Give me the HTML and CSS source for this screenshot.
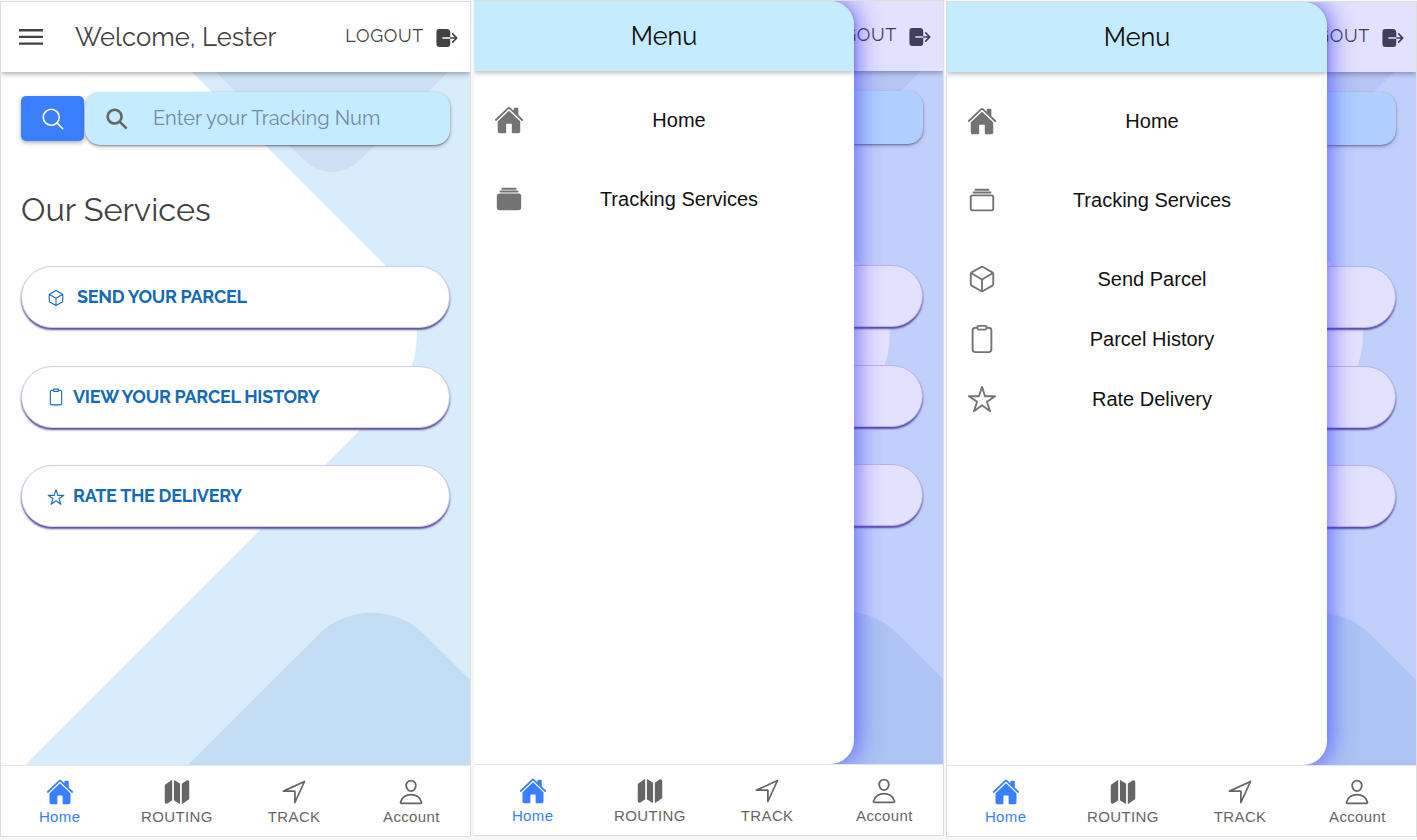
FILE: index.html
```html
<!DOCTYPE html>
<html lang="en">
<head>
<meta charset="utf-8">
<title>Parcel tracking</title>
<link rel="stylesheet" href="styles.css">
</head>
<body>
<svg class="sprite" aria-hidden="true">
  <symbol id="home" viewBox="0 0 512 512"><path fill="currentColor" d="M261.56 101.28a8 8 0 00-11.06 0L66.4 277.15a8 8 0 00-2.47 5.79L63.9 448a32 32 0 0032 32H192a16 16 0 0016-16V328a8 8 0 018-8h80a8 8 0 018 8v136a16 16 0 0016 16h96.06a32 32 0 0032-32V282.94a8 8 0 00-2.47-5.79z"/><path fill="currentColor" d="M490.91 244.15l-74.8-71.56V64a16 16 0 00-16-16h-48a16 16 0 00-16 16v32l-57.92-55.38C272.77 35.14 264.71 32 256 32c-8.68 0-16.72 3.14-22.14 8.63l-212.7 203.5c-6.22 6-7 15.87-1.34 22.37A16 16 0 0043 267.56L250.5 69.28a8 8 0 0111.06 0l207.52 198.28a16 16 0 0022.59-.44c6.14-6.36 5.63-16.86-.76-22.97z"/></symbol>
  <symbol id="albums" viewBox="0 0 512 512"><path fill="currentColor" d="M368 96H144a16 16 0 010-32h224a16 16 0 010 32zM400 144H112a16 16 0 010-32h288a16 16 0 010 32zM419.13 448H92.87A44.92 44.92 0 0148 403.13V204.87A44.92 44.92 0 0192.87 160h326.26A44.92 44.92 0 01464 204.87v198.26A44.92 44.92 0 01419.13 448z"/></symbol>
  <symbol id="albums-outline" viewBox="0 0 512 512"><g class="stroke"><rect x="64" y="176" width="384" height="256" rx="28.87"/><path d="M144 80h224M112 128h288"/></g></symbol>
  <symbol id="cube" viewBox="0 0 512 512"><path class="stroke" d="M448 341.37V170.61A32 32 0 00432.11 143l-152-88.46a47.94 47.94 0 00-48.24 0L79.89 143A32 32 0 0064 170.61v170.76A32 32 0 0079.89 369l152 88.46a48 48 0 0048.24 0l152-88.46A32 32 0 00448 341.37zM69 153.99l187 110 187-110M256 463.99v-200"/></symbol>
  <symbol id="clipboard" viewBox="0 0 512 512"><g class="stroke"><path d="M336 64h32a48 48 0 0148 48v320a48 48 0 01-48 48H144a48 48 0 01-48-48V112a48 48 0 0148-48h32"/><rect x="176" y="32" width="160" height="64" rx="26.13"/></g></symbol>
  <symbol id="star" viewBox="0 0 512 512"><path class="stroke" d="M480 208H308L256 48l-52 160H32l140 96-54 160 138-100 138 100-54-160z"/></symbol>
  <symbol id="map" viewBox="0 0 512 512"><path fill="currentColor" d="M48.17 113.34A32 32 0 0032 141.24V438a32 32 0 0047 28.37c.43-.23.85-.47 1.26-.74l84.14-55.05a8 8 0 003.63-6.72V46.45a8 8 0 00-12.51-6.63zM212.36 39.31A8 8 0 00200 46v357.56a8 8 0 003.63 6.72l96 62.42A8 8 0 00312 466V108.67a8 8 0 00-3.64-6.73zM464.53 46.47a31.64 31.64 0 00-31.5-.88 12.07 12.07 0 00-1.25.74l-84.15 55a8 8 0 00-3.63 6.72v357.46a8 8 0 0012.52 6.63l107.07-73.46a32 32 0 0016.41-28v-296a32.76 32.76 0 00-15.47-28.21z"/></symbol>
  <symbol id="navigate" viewBox="0 0 512 512"><path class="stroke" d="M448 64L64 240.14h200a8 8 0 018 8V448z"/></symbol>
  <symbol id="person" viewBox="0 0 512 512"><path class="stroke" d="M344 144c-3.920 52.870-44 96-88 96s-84.150-43.120-88-96c-4-55 35-96 88-96s92 42 88 96zM256 304c-87 0-175.300 48-191.640 138.600C62.390 453.520 68.570 464 80 464h352c11.440 0 17.620-10.480 15.650-21.400C431.300 352 343 304 256 304z"/></symbol>
  <symbol id="search" viewBox="0 0 512 512"><path class="stroke" d="M221.09 64a157.09 157.09 0 10157.09 157.09A157.1 157.1 0 00221.09 64zM338.29 338.29L448 448"/></symbol>
  <symbol id="search-bold" viewBox="0 0 512 512"><path fill="currentColor" d="M464 428L339.92 303.9a160.48 160.48 0 0030.72-94.58C370.64 120.37 298.27 48 209.32 48S48 120.37 48 209.32s72.37 161.32 161.32 161.32a160.48 160.48 0 0094.58-30.72L428 464zM209.32 319.69a110.38 110.38 0 11110.37-110.37 110.5 110.5 0 01-110.37 110.37z"/></symbol>
  <symbol id="logout" viewBox="0 0 512 512"><path fill="currentColor" d="M160 256a16 16 0 0116-16h144V136c0-32-33.79-56-64-56H104a56.06 56.06 0 00-56 56v240a56.06 56.06 0 0056 56h160a56.06 56.06 0 0056-56V272H176a16 16 0 01-16-16zM459.31 244.69l-80-80a16 16 0 00-22.62 22.62L409.37 240H320v32h89.37l-52.68 52.69a16 16 0 1022.62 22.62l80-80a16 16 0 000-22.62z"/></symbol>
  <symbol id="burger" viewBox="0 0 24 16"><path fill="currentColor" d="M0 0h24v2.4H0zM0 6.7h24v2.4H0zM0 13.4h24v2.4H0z"/></symbol>
  <symbol id="shapes" viewBox="0 0 469 693">
    <path fill="#d9ecfc" d="M191 0H469V693H24L389 328A92 92 0 0 0 389 198Z"/>
    <path fill="#ccdff3" d="M215 0H447L358.300 88.700A38.600 38.600 0 0 1 303.700 88.700Z"/>
    <path fill="#c2dcf3" d="M187 693L317.300 562.700A75.300 75.300 0 0 1 423.700 562.700L469 608V693Z"/>
  </symbol>
</svg>

<main class="board">
  <section class="phone">
    <div class="screen">
      <header class="topbar">
        <svg class="burger"><use href="#burger"/></svg>
        <h2 class="welcome">Welcome, Lester</h2>
        <span class="logout">LOGOUT</span>
        <svg class="logout-icon"><use href="#logout"/></svg>
      </header>
      <div class="content">
        <svg class="backdrop-art"><use href="#shapes"/></svg>
        <div class="search-row">
          <button class="search-btn"><svg class="i26"><use href="#search"/></svg></button>
          <div class="searchbar"><svg class="i26"><use href="#search-bold"/></svg><span class="placeholder">Enter your Tracking Num</span></div>
        </div>
        <h1 class="title">Our Services</h1>
        <div class="cards">
          <a class="card"><svg class="i18"><use href="#cube"/></svg><span class="send">SEND YOUR PARCEL</span></a>
          <a class="card"><svg class="i18"><use href="#clipboard"/></svg><span class="view">VIEW YOUR PARCEL HISTORY</span></a>
          <a class="card"><svg class="i18"><use href="#star"/></svg><span class="rate">RATE THE DELIVERY</span></a>
        </div>
      </div>
    </div>
    <nav class="tabs">
      <a class="tab active"><svg class="i28"><use href="#home"/></svg><span>Home</span></a>
      <a class="tab"><svg class="i28"><use href="#map"/></svg><span>ROUTING</span></a>
      <a class="tab"><svg class="i28"><use href="#navigate"/></svg><span>TRACK</span></a>
      <a class="tab"><svg class="i28"><use href="#person"/></svg><span>Account</span></a>
    </nav>
  </section>

  <section class="phone raised">
    <div class="screen">
      <header class="topbar">
        <span class="logout">LOGOUT</span>
        <svg class="logout-icon"><use href="#logout"/></svg>
      </header>
      <div class="content">
        <svg class="backdrop-art"><use href="#shapes"/></svg>
        <div class="search-row"><div class="search-btn"></div><div class="searchbar"></div></div>
        <div class="title"></div>
        <div class="cards"><div class="card"></div><div class="card"></div><div class="card"></div></div>
      </div>
      <div class="scrim"></div>
      <aside class="drawer">
        <h2 class="drawer-title">Menu</h2>
        <ul class="menu">
          <li class="item"><svg class="i30"><use href="#home"/></svg><span>Home</span></li>
          <li class="item spaced"><svg class="i30"><use href="#albums"/></svg><span>Tracking Services</span></li>
        </ul>
      </aside>
    </div>
    <nav class="tabs">
      <a class="tab active"><svg class="i28"><use href="#home"/></svg><span>Home</span></a>
      <a class="tab"><svg class="i28"><use href="#map"/></svg><span>ROUTING</span></a>
      <a class="tab"><svg class="i28"><use href="#navigate"/></svg><span>TRACK</span></a>
      <a class="tab"><svg class="i28"><use href="#person"/></svg><span>Account</span></a>
    </nav>
  </section>

  <section class="phone">
    <div class="screen">
      <header class="topbar">
        <span class="logout">LOGOUT</span>
        <svg class="logout-icon"><use href="#logout"/></svg>
      </header>
      <div class="content">
        <svg class="backdrop-art"><use href="#shapes"/></svg>
        <div class="search-row"><div class="search-btn"></div><div class="searchbar"></div></div>
        <div class="title"></div>
        <div class="cards"><div class="card"></div><div class="card"></div><div class="card"></div></div>
      </div>
      <div class="scrim"></div>
      <aside class="drawer">
        <h2 class="drawer-title">Menu</h2>
        <ul class="menu">
          <li class="item"><svg class="i30"><use href="#home"/></svg><span>Home</span></li>
          <li class="item spaced"><svg class="i30"><use href="#albums-outline"/></svg><span>Tracking Services</span></li>
          <li class="item spaced"><svg class="i30"><use href="#cube"/></svg><span>Send Parcel</span></li>
          <li class="item"><svg class="i30"><use href="#clipboard"/></svg><span>Parcel History</span></li>
          <li class="item"><svg class="i30"><use href="#star"/></svg><span>Rate Delivery</span></li>
        </ul>
      </aside>
    </div>
    <nav class="tabs">
      <a class="tab active"><svg class="i28"><use href="#home"/></svg><span>Home</span></a>
      <a class="tab"><svg class="i28"><use href="#map"/></svg><span>ROUTING</span></a>
      <a class="tab"><svg class="i28"><use href="#navigate"/></svg><span>TRACK</span></a>
      <a class="tab"><svg class="i28"><use href="#person"/></svg><span>Account</span></a>
    </nav>
  </section>
</main>
</body>
</html>
```
FILE: styles.css
```css
* { box-sizing: border-box; }
body { margin: 0; background: #f8f8f8; font-family: "Liberation Sans", Arial, sans-serif; overflow: hidden; }
h1, h2, ul { margin: 0; padding: 0; font-weight: 400; }
svg { display: block; flex: none; }
.sprite { position: absolute; width: 0; height: 0; }
.stroke { fill: none; stroke: currentColor; stroke-width: 32; stroke-linecap: round; stroke-linejoin: round; }
.i18 { width: 18px; height: 18px; }
.i26 { width: 26px; height: 26px; }
.i28 { width: 28px; height: 28px; }
.i30 { width: 30px; height: 30px; }

.board { display: flex; gap: 2px; height: 840px; padding-top: 1px; align-items: flex-start; }
.phone { flex: none; width: 471px; height: 836px; border: 1px solid #dedede; background: #fff; }
.phone.raised { margin-top: -1px; border-left-color: #f4f4f4; }
.screen { position: relative; height: 763px; overflow: hidden; }

.topbar { position: relative; z-index: 1; display: flex; align-items: center; height: 70px; padding: 0 10.500px 0 18px; background: #fff; color: #424242; box-shadow: 0 2px 5px rgba(0, 0, 0, .32); }
.burger { width: 24px; height: 16px; }
.welcome { margin-left: 32px; font: 400 25.600px/32px Raleway, Lato, sans-serif; white-space: nowrap; }
.logout { margin-left: auto; margin-bottom: 2px; font: 400 18px/24px Raleway, Lato, sans-serif; letter-spacing: .7px; }
.logout-icon { width: 26px; height: 26px; margin-left: 9.500px; margin-top: 1px; }

.content { position: relative; height: 693px; padding: 20px 20px 0; isolation: isolate; }
.backdrop-art { position: absolute; inset: 0; z-index: -1; width: 469px; height: 693px; }
.search-row { display: flex; align-items: center; gap: 1px; height: 53px; }
.search-btn { display: flex; align-items: center; justify-content: center; width: 63px; height: 45px; padding: 0; border: 0; border-radius: 5px; background: #3880ff; color: #fff; box-shadow: 0 2px 4px rgba(0, 0, 0, .3); }
.searchbar { display: flex; align-items: center; flex: 1; height: 53px; padding-left: 19px; border-radius: 15px; background: #c5ebff; color: #666; box-shadow: 0 1px 2px rgba(0, 0, 0, .4), 0 2px 5px rgba(0, 0, 0, .18); }
.placeholder { margin: 0 0 2px 23px; font: 400 20px/26px Raleway, Lato, sans-serif; color: #7489a6; white-space: nowrap; }
.title { height: 40px; margin-top: 45px; font: 400 32.500px/40px Raleway, Lato, sans-serif; color: #424242; }
.cards { display: flex; flex-direction: column; gap: 37.500px; margin-top: 36px; }
.card { display: flex; align-items: center; height: 62px; padding: 1px 0 0 25px; border: 1px solid #cfcbe8; border-radius: 31px; background: #fff; color: #146ab5; box-shadow: 0 2px 2px #5c529c; font: 700 18px/24px Raleway, Lato, sans-serif; letter-spacing: -.3px; white-space: nowrap; }
.card span { margin-left: 8px; margin-bottom: 1px; }
.card .send { margin-left: 12px; }

.scrim { position: absolute; inset: 0; z-index: 2; background: rgba(50, 40, 250, .14); }
.drawer { position: absolute; top: 0; left: 0; bottom: 0; z-index: 3; width: 380px; border-radius: 0 24px 24px 0; background: #fff; box-shadow: 3px 0 24px rgba(50, 45, 255, .66); }
.drawer-title { height: 70px; border-radius: 0 24px 0 0; background: #c5ebff; box-shadow: 0 2px 5px rgba(0, 0, 0, .28); font: 400 25.300px/71px Raleway, Lato, sans-serif; text-align: center; color: #111; }
.menu { padding-top: 19px; list-style: none; }
.item { display: flex; align-items: center; height: 60px; padding: 0 20px; color: #737373; }
.item.spaced { margin-top: 19px; }
.item span { flex: 1; text-align: center; font-size: 20px; line-height: 26px; color: #111; }

.tabs { display: grid; grid-template-columns: repeat(4, 1fr); height: 71px; border-top: 1px solid #e6e6e6; }
.tab { display: flex; flex-direction: column; align-items: center; padding-top: 12px; color: #666; font-size: 15px; line-height: 22px; letter-spacing: .35px; }
.tab.active { color: #3880ff; }
```
